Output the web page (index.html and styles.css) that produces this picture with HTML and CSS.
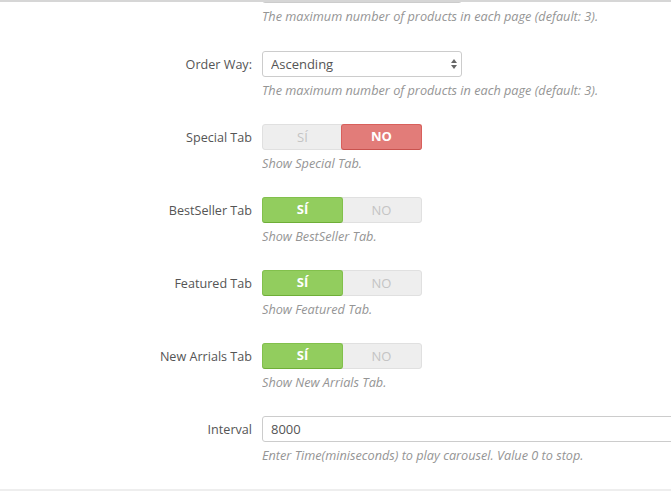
FILE: index.html
```html
<!DOCTYPE html>
<html lang="en">
<head>
    <meta charset="UTF-8">
    <meta name="viewport" content="width=device-width, initial-scale=1.0">
    <title>Module settings</title>
    <link rel="stylesheet" href="styles.css">
</head>
<body>
    <div class="topbar"></div>
    <div class="panel">
        <div class="form-group first">
            <label class="control-label"></label>
            <div class="controls">
                <div class="select-wrap">
                    <select class="form-control select"><option>3</option></select>
                </div>
                <p class="help-block">The maximum number of products in each page (default: 3).</p>
            </div>
        </div>

        <div class="form-group">
            <label class="control-label">Order Way:</label>
            <div class="controls">
                <div class="select-wrap">
                    <select class="form-control select"><option>Ascending</option></select>
                    <svg class="caret" width="8" height="12" viewBox="0 0 8 12">
                        <path d="M4 1 L7 5 L1 5 Z" fill="#666"/>
                        <path d="M4 11 L7 7 L1 7 Z" fill="#666"/>
                    </svg>
                </div>
                <p class="help-block">The maximum number of products in each page (default: 3).</p>
            </div>
        </div>

        <div class="form-group">
            <label class="control-label">Special Tab</label>
            <div class="controls">
                <div class="switch">
                    <span class="opt">SÍ</span>
                    <span class="opt off-on">NO</span>
                </div>
                <p class="help-block">Show Special Tab.</p>
            </div>
        </div>

        <div class="form-group">
            <label class="control-label">BestSeller Tab</label>
            <div class="controls">
                <div class="switch">
                    <span class="opt yes-on">SÍ</span>
                    <span class="opt">NO</span>
                </div>
                <p class="help-block">Show BestSeller Tab.</p>
            </div>
        </div>

        <div class="form-group">
            <label class="control-label">Featured Tab</label>
            <div class="controls">
                <div class="switch">
                    <span class="opt yes-on">SÍ</span>
                    <span class="opt">NO</span>
                </div>
                <p class="help-block">Show Featured Tab.</p>
            </div>
        </div>

        <div class="form-group">
            <label class="control-label">New Arrials Tab</label>
            <div class="controls">
                <div class="switch">
                    <span class="opt yes-on">SÍ</span>
                    <span class="opt">NO</span>
                </div>
                <p class="help-block">Show New Arrials Tab.</p>
            </div>
        </div>

        <div class="form-group">
            <label class="control-label">Interval</label>
            <div class="controls">
                <input type="text" class="form-control wide" value="8000">
                <p class="help-block">Enter Time(miniseconds) to play carousel. Value 0 to stop.</p>
            </div>
        </div>
    </div>
    <div class="panel-footer"></div>
</body>
</html>
```

FILE: styles.css
```css
html, body{
    margin: 0;
    padding: 0;
    overflow: hidden;
    background: #fff;
}
body{
    font-family: "Open Sans", "Liberation Sans", sans-serif;
    font-size: 13px;
    color: #555;
    position: relative;
    height: 491px;
}
.topbar{
    position: absolute;
    top: 0;
    left: 0;
    right: 0;
    height: 2px;
    background: #d6d6d6;
    z-index: 2;
}
.panel{
    margin-top: -23px;
}
.form-group{
    display: flex;
    margin-bottom: 25px;
}
.form-group.first{
    margin-bottom: 26px;
}
.control-label{
    width: 252px;
    padding-right: 10px;
    text-align: right;
    line-height: 28px;
    height: 26px;
    flex-shrink: 0;
    font-size: 12.6px;
}
.controls{
    flex: 1;
    min-width: 0;
    overflow: hidden;
}
.form-control{
    box-sizing: border-box;
    height: 26px;
    border: 1px solid #ccc;
    border-radius: 3px;
    background: #fff;
    font-family: inherit;
    font-size: 13px;
    color: #555;
    padding: 0 8px;
    display: block;
    outline: none;
}
.select-wrap{
    position: relative;
    width: 200px;
}
.select{
    width: 200px;
    -webkit-appearance: none;
    appearance: none;
}
.caret{
    position: absolute;
    right: 4px;
    top: 7px;
}
.wide{
    width: 520px;
}
.help-block{
    margin: 4px 0 0;
    line-height: 18px;
    font-size: 12.7px;
    font-style: italic;
    color: #959595;
    white-space: nowrap;
}
.switch{
    display: flex;
    width: 160px;
    height: 26px;
    box-sizing: border-box;
    background: #eee;
    border: 1px solid #e0e0e0;
    border-radius: 3px;
}
.opt{
    flex: 1;
    text-align: center;
    line-height: 24px;
    color: #c4c4c4;
    font-size: 13px;
}
.yes-on, .off-on{
    margin: -1px;
    color: #fff;
    font-weight: bold;
    border-radius: 3px;
    box-sizing: border-box;
    line-height: 23px;
}
.yes-on{
    background: #92cd5e;
    border: 1px solid #82c04c;
    border-bottom-color: #6eae37;
}
.off-on{
    background: #e27c79;
    border: 1px solid #d8605c;
    border-bottom-color: #c9524e;
}
.panel-footer{
    position: absolute;
    left: 0;
    right: 0;
    top: 489px;
    height: 2px;
    background: #eee;
}
```
